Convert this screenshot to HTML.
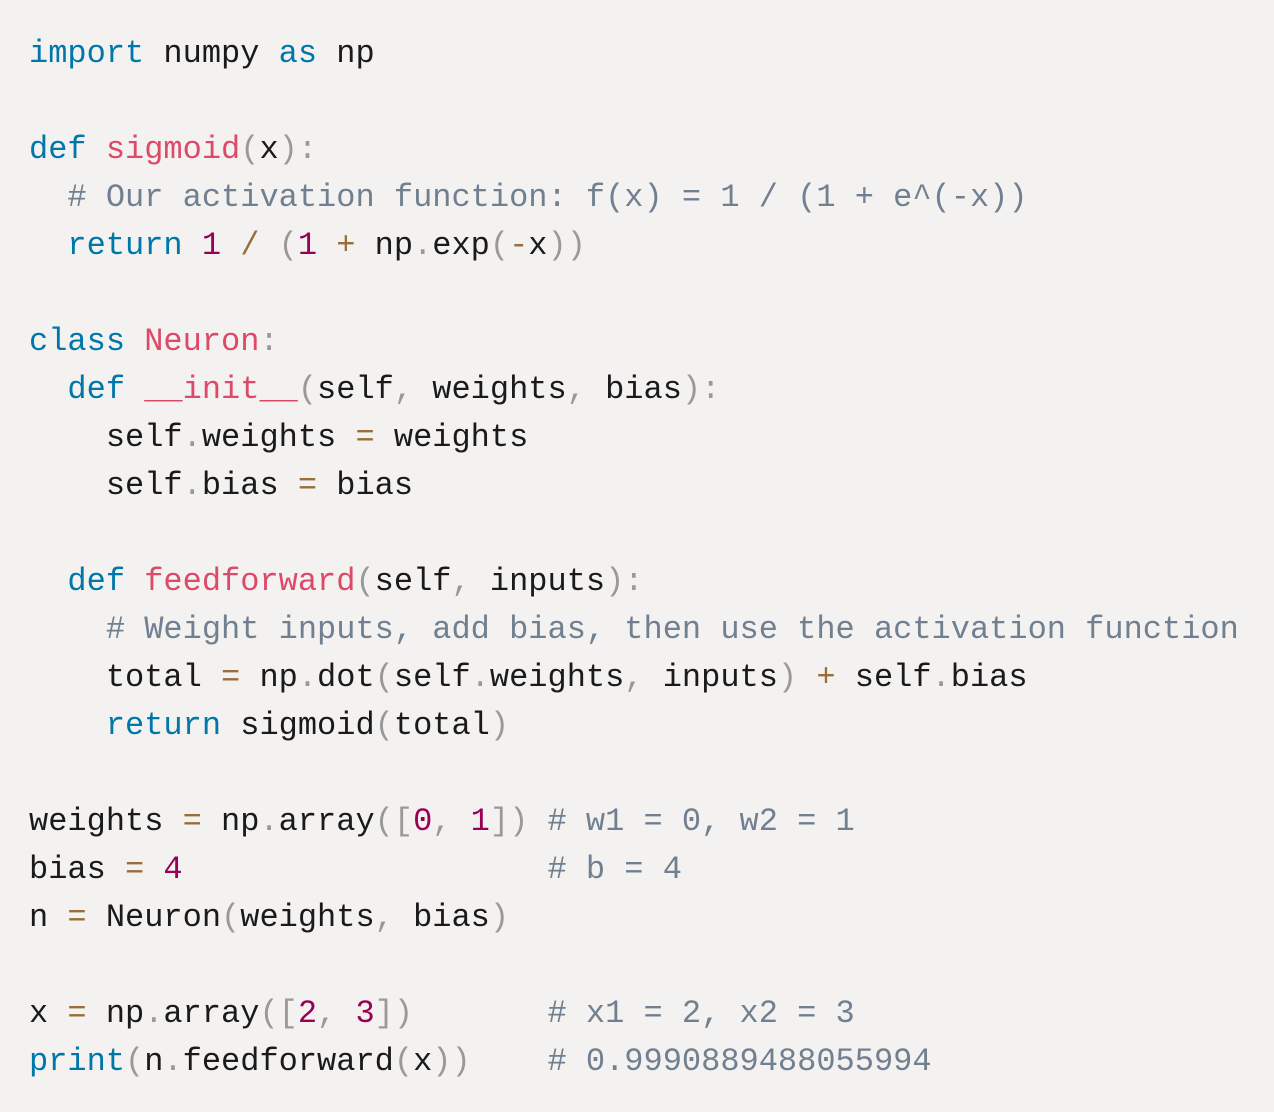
<!DOCTYPE html>
<html><head><meta charset="utf-8"><style>
html,body{margin:0;padding:0;background:#f3f2f1;width:1274px;height:1112px;overflow:hidden}
pre{margin:0;padding:30px 0 0 29px;font-family:"Liberation Mono",monospace;font-size:32px;line-height:48px;color:#1a1a1a;white-space:pre}
.k{color:#0077aa}.f{color:#dd4a68}.p{color:#999}.n{color:#990055}.o{color:#9a6e3a}.c{color:#708090}
</style></head><body><pre><span class="k">import</span> numpy <span class="k">as</span> np

<span class="k">def</span> <span class="f">sigmoid</span><span class="p">(</span>x<span class="p">):</span>
  <span class="c"># Our activation function: f(x) = 1 / (1 + e^(-x))</span>
  <span class="k">return</span> <span class="n">1</span> <span class="o">/</span> <span class="p">(</span><span class="n">1</span> <span class="o">+</span> np<span class="p">.</span>exp<span class="p">(</span><span class="o">-</span>x<span class="p">))</span>

<span class="k">class</span> <span class="f">Neuron</span><span class="p">:</span>
  <span class="k">def</span> <span class="f">__init__</span><span class="p">(</span>self<span class="p">,</span> weights<span class="p">,</span> bias<span class="p">):</span>
    self<span class="p">.</span>weights <span class="o">=</span> weights
    self<span class="p">.</span>bias <span class="o">=</span> bias

  <span class="k">def</span> <span class="f">feedforward</span><span class="p">(</span>self<span class="p">,</span> inputs<span class="p">):</span>
    <span class="c"># Weight inputs, add bias, then use the activation function</span>
    total <span class="o">=</span> np<span class="p">.</span>dot<span class="p">(</span>self<span class="p">.</span>weights<span class="p">,</span> inputs<span class="p">)</span> <span class="o">+</span> self<span class="p">.</span>bias
    <span class="k">return</span> sigmoid<span class="p">(</span>total<span class="p">)</span>

weights <span class="o">=</span> np<span class="p">.</span>array<span class="p">([</span><span class="n">0</span><span class="p">,</span> <span class="n">1</span><span class="p">])</span> <span class="c"># w1 = 0, w2 = 1</span>
bias <span class="o">=</span> <span class="n">4</span>                   <span class="c"># b = 4</span>
n <span class="o">=</span> Neuron<span class="p">(</span>weights<span class="p">,</span> bias<span class="p">)</span>

x <span class="o">=</span> np<span class="p">.</span>array<span class="p">([</span><span class="n">2</span><span class="p">,</span> <span class="n">3</span><span class="p">])</span>       <span class="c"># x1 = 2, x2 = 3</span>
<span class="k">print</span><span class="p">(</span>n<span class="p">.</span>feedforward<span class="p">(</span>x<span class="p">))</span>    <span class="c"># 0.9990889488055994</span></pre></body></html>
